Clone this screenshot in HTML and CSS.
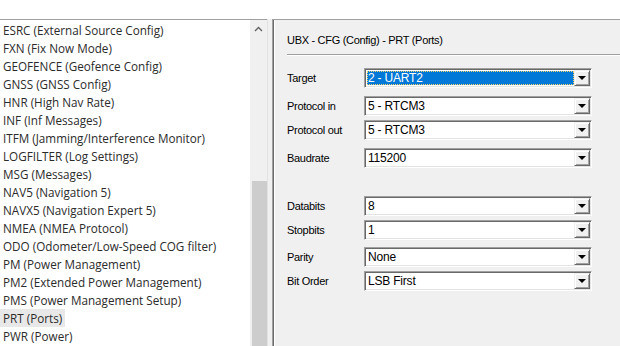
FILE: index.html
```html
<!DOCTYPE html>
<html lang="en">

<head>
  <meta charset="UTF-8">
  <meta name="viewport" content="width=device-width, initial-scale=1.0">
  <title>UBX - CFG - PRT</title>
  <link rel="stylesheet" href="styles.css">
</head>

<body>
  <div class="topbar"></div>

  <div class="main">
    <!-- message list -->
    <div class="list">
      <ul class="items">
        <li>ESRC (External Source Config)</li>
        <li>FXN (Fix Now Mode)</li>
        <li>GEOFENCE (Geofence Config)</li>
        <li>GNSS (GNSS Config)</li>
        <li>HNR (High Nav Rate)</li>
        <li>INF (Inf Messages)</li>
        <li>ITFM (Jamming/Interference Monitor)</li>
        <li>LOGFILTER (Log Settings)</li>
        <li>MSG (Messages)</li>
        <li>NAV5 (Navigation 5)</li>
        <li>NAVX5 (Navigation Expert 5)</li>
        <li>NMEA (NMEA Protocol)</li>
        <li>ODO (Odometer/Low-Speed COG filter)</li>
        <li>PM (Power Management)</li>
        <li>PM2 (Extended Power Management)</li>
        <li>PMS (Power Management Setup)</li>
        <li><span class="current">PRT (Ports)</span></li>
        <li>PWR (Power)</li>
      </ul>
      <div class="scrollbar">
        <div class="arrow">
          <svg width="9" height="6" viewBox="0 0 9 6">
            <path d="M1 5 L4.5 1.5 L8 5" fill="none" stroke="#606060" stroke-width="1.3" />
          </svg>
        </div>
        <div class="thumb"></div>
      </div>
    </div>

    <div class="splitter"></div>

    <!-- settings panel -->
    <div class="panel">
      <div class="title">UBX - CFG (Config) - PRT (Ports)</div>
      <div class="sep"></div>

      <div class="row first">
        <span class="label">Target</span>
        <div class="combo">
          <span class="value selected"><span class="focus">2 - UART2</span></span>
          <span class="btn"><i class="tri"></i></span>
        </div>
      </div>
      <div class="row wide">
        <span class="label">Protocol in</span>
        <div class="combo">
          <span class="value">5 - RTCM3</span>
          <span class="btn"><i class="tri"></i></span>
        </div>
      </div>
      <div class="row">
        <span class="label">Protocol out</span>
        <div class="combo">
          <span class="value">5 - RTCM3</span>
          <span class="btn"><i class="tri"></i></span>
        </div>
      </div>
      <div class="row wide">
        <span class="label">Baudrate</span>
        <div class="combo">
          <span class="value">115200</span>
          <span class="btn"><i class="tri"></i></span>
        </div>
      </div>

      <div class="row group">
        <span class="label">Databits</span>
        <div class="combo">
          <span class="value">8</span>
          <span class="btn"><i class="tri"></i></span>
        </div>
      </div>
      <div class="row">
        <span class="label">Stopbits</span>
        <div class="combo">
          <span class="value">1</span>
          <span class="btn"><i class="tri"></i></span>
        </div>
      </div>
      <div class="row mid">
        <span class="label">Parity</span>
        <div class="combo">
          <span class="value">None</span>
          <span class="btn"><i class="tri"></i></span>
        </div>
      </div>
      <div class="row">
        <span class="label">Bit Order</span>
        <div class="combo">
          <span class="value">LSB First</span>
          <span class="btn"><i class="tri"></i></span>
        </div>
      </div>
    </div>
  </div>
</body>

</html>
```

FILE: styles.css
```css
* {
  box-sizing: border-box;
}

html,
body {
  margin: 0;
  height: 100%;
  overflow: hidden;
  background: #fff;
}

.topbar {
  height: 19px;
  background: #fff;
}

.main {
  display: flex;
  height: 327px;
}

/* list on the left */
.list {
  width: 267px;
  display: flex;
  border-top: 1px solid #a0a0a0;
  background: #fff;
}

.items {
  flex: 1;
  list-style: none;
  margin: 0;
  padding: 1px 0 0 0;
  font-family: "Open Sans", sans-serif;
  font-size: 11.7px;
  color: #2b2b2b;
}

.items li {
  height: 18px;
  line-height: 18px;
  padding-left: 3px;
  white-space: nowrap;
}

.current {
  display: inline-block;
  background: #e8e8e8;
  margin-left: -3px;
  padding: 0 3px;
}

.scrollbar {
  width: 17px;
  background: #f0f0f0;
  display: flex;
  flex-direction: column;
}

.arrow {
  height: 17px;
  display: flex;
  align-items: center;
  justify-content: center;
}

.thumb {
  margin: 144px 0 0 2px;
  flex: 1;
  background: #cdcdcd;
}

.splitter {
  width: 5px;
  background: #f0f0f0;
  border-left: 1px solid #e3e3e3;
}

/* settings panel */
.panel {
  flex: 1;
  background: #f0f0f0;
  border-left: 1px solid #a0a0a0;
  border-top: 1px solid #a0a0a0;
  box-shadow: inset 1px 0 #696969, inset 2px 0 #fff;
  padding-left: 14px;
  font-family: "Liberation Sans", Arial, sans-serif;
  font-size: 11px;
  letter-spacing: -0.3px;
  color: #000;
}

.title {
  height: 34px;
  line-height: 40px;
}

.sep {
  height: 2px;
  border-top: 1px solid #a0a0a0;
  border-bottom: 1px solid #fff;
}

.row {
  display: flex;
  align-items: center;
  margin-top: 4px;
}

.row.first {
  margin-top: 12px;
}

.row.wide {
  margin-top: 8px;
}

.row.mid {
  margin-top: 7px;
}

.row.group {
  margin-top: 28px;
}

.label {
  width: 77px;
}

.combo {
  width: 228px;
  height: 20px;
  display: flex;
  background: #fff;
  border: 1px solid;
  border-color: #a0a0a0 #fff #fff #a0a0a0;
  box-shadow: inset 1px 1px #696969, inset -1px -1px #e3e3e3;
  padding: 2px;
}

.value {
  flex: 1;
  line-height: 15px;
  font-size: 12px;
  letter-spacing: -0.2px;
  padding-left: 1px;
}

.value.selected {
  background: #0078d7;
  color: #fff;
  padding: 0;
}

.focus {
  display: block;
  height: 100%;
  outline: 1px dotted #f5d36a;
  outline-offset: -1px;
  padding-left: 1px;
}

.btn {
  width: 16px;
  height: 16px;
  margin: -1px -1px 0 0;
  background: #f0f0f0;
  border: 1px solid;
  border-color: #f0f0f0 #696969 #696969 #f0f0f0;
  box-shadow: inset 1px 1px #fff, inset -1px -1px #a0a0a0;
  display: flex;
  align-items: center;
  justify-content: center;
}

.tri {
  width: 0;
  height: 0;
  border-left: 4px solid transparent;
  border-right: 4px solid transparent;
  border-top: 4px solid #000;
}
```
